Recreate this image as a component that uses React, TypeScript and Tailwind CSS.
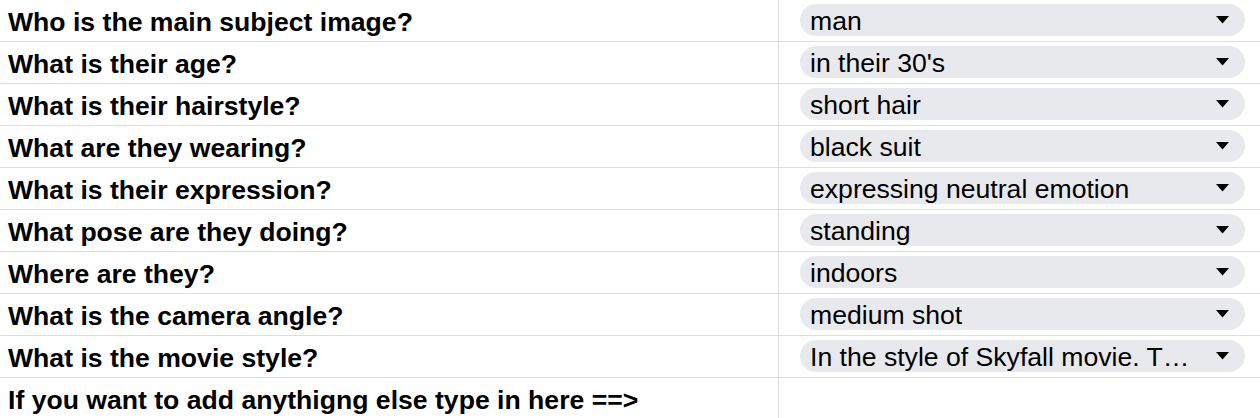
import React from "react";

const rows: { q: string; a?: string }[] = [
  { q: "Who is the main subject image?", a: "man" },
  { q: "What is their age?", a: "in their 30's" },
  { q: "What is their hairstyle?", a: "short hair" },
  { q: "What are they wearing?", a: "black suit" },
  { q: "What is their expression?", a: "expressing neutral emotion" },
  { q: "What pose are they doing?", a: "standing" },
  { q: "Where are they?", a: "indoors" },
  { q: "What is the camera angle?", a: "medium shot" },
  { q: "What is the movie style?", a: "In the style of Skyfall movie. T…" },
  { q: "If you want to add anythigng else type in here ==>" },
];

function Arrow() {
  return (
    <svg width="13" height="8" viewBox="0 0 13 8" className="shrink-0">
      <path d="M0 0 H13 L6.5 7.5 Z" fill="#000" />
    </svg>
  );
}

export default function App() {
  return (
    <div
      className="w-[1260px] h-[418px] overflow-hidden bg-white text-black"
      style={{ fontFamily: '"Liberation Sans", Arial, sans-serif' }}
    >
      {rows.map((r, i) => (
        <div key={i} className="flex h-[42px] border-b border-[#dedede]">
          <div className="w-[779px] shrink-0 border-r border-[#dedede] pl-[8px] pt-[7px] text-[26.6px] leading-[30px] font-bold whitespace-nowrap">
            {r.q}
          </div>
          <div className="flex-1 pl-[21px] pr-[15px] pt-[4px]">
            {r.a && (
              <div className="flex h-[32px] items-center rounded-full bg-[#e8e9ec] pl-[10px] pr-[16px]">
                <span className="flex-1 truncate text-[26.6px] leading-[30px] pt-[2px]">{r.a}</span>
                <Arrow />
              </div>
            )}
          </div>
        </div>
      ))}
    </div>
  );
}
